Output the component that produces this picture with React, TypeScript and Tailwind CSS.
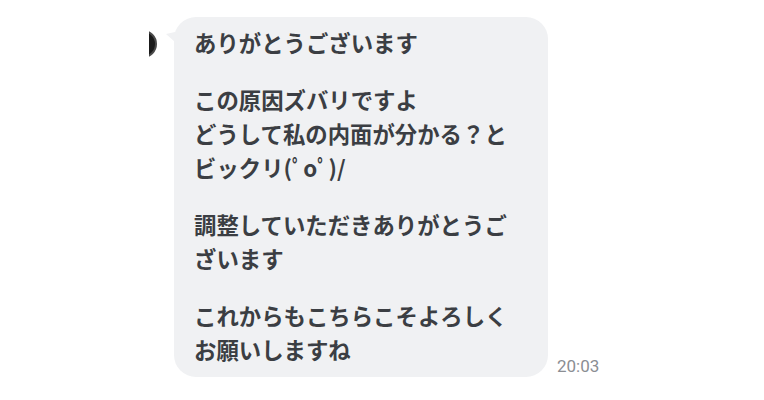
export default function App() {
  const paragraphs = [
    ['ありがとうございます'],
    ['この原因ズバリですよ', 'どうして私の内面が分かる？と', 'ビックリ(ﾟoﾟ)/'],
    ['調整していただきありがとうご', 'ざいます'],
    ['これからもこちらこそよろしく', 'お願いしますね'],
  ]

  return (
    <div className="w-[764px] h-[400px] bg-white flex items-start pl-[149px] pt-[17px]" style={{ fontFamily: '"Noto Sans CJK JP", "Noto Sans", sans-serif' }}>
      {/* Avatar edge */}
      <div className="mt-[13px] w-[8px] h-[28px] overflow-hidden relative">
        <div className="absolute right-0 top-0 w-[28px] h-[28px] rounded-full bg-[#1a1a1a] border-[2px] border-[#4a4a4a]" />
      </div>

      {/* Bubble */}
      <div className="relative ml-[17px] flex items-end gap-[9px]">
        <svg className="absolute left-[-8px] top-[15px]" width="10" height="10" viewBox="0 0 10 10">
          <path d="M9 0 L9 10 L0 2 Z" fill="#f0f1f3" />
        </svg>
        <div className="w-[374px] h-[360px] bg-[#f0f1f3] rounded-[22px] px-[20px] pt-[8px] text-[22.4px] leading-[34px] font-semibold text-[#3b3e43] flex flex-col gap-[23px]">
          {paragraphs.map((p, i) => (
            <div key={i}>
              {p.map((line, j) => (
                <div key={j}>{line}</div>
              ))}
            </div>
          ))}
        </div>
        <span className="text-[17px] text-[#8b8e93] mb-[2px] leading-none" style={{ fontFamily: 'Roboto, "Noto Sans", sans-serif' }}>20:03</span>
      </div>
    </div>
  )
}
